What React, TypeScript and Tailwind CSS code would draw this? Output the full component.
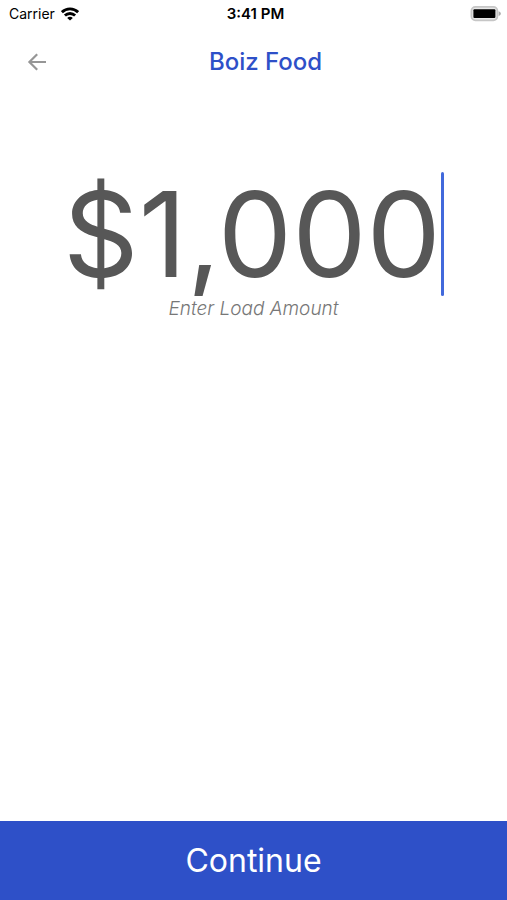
import React, { useState } from 'react'

const WifiIcon = () => (
  <svg viewBox="0 0 18 14" className="w-[18px] h-[14px]" fill="none" stroke="#000" strokeWidth="2.8" aria-hidden="true">
    <path d="M0.9 5.2C5.4 0.7 12.6 0.7 17.1 5.2" />
    <path d="M3.9 8.6C6.7 5.8 11.3 5.8 14.1 8.6" />
    <path d="M9 13.6L6.2 10.9C7.8 9.4 10.2 9.4 11.8 10.9Z" fill="#000" stroke="none" />
  </svg>
)

const BatteryIcon = () => (
  <svg viewBox="0 0 32 16" className="w-8 h-4" aria-hidden="true">
    <rect x="1.4" y="0.9" width="26" height="13.4" rx="4" fill="#e8e8e8" stroke="#c6c6c6" strokeWidth="1.8" />
    <rect x="3.4" y="3.2" width="22" height="8.8" rx="1" fill="#000" />
    <path d="M28.6 5.2C31.6 6.2 31.6 9 28.6 10Z" fill="#ababab" />
  </svg>
)

const BackIcon = () => (
  <svg viewBox="0 0 20 20" className="w-5 h-5" fill="none" stroke="#969696" strokeWidth="2.2" aria-hidden="true">
    <path d="M11.2 2.2L3.4 10L11.2 17.8M3.6 10H20" />
  </svg>
)

const StatusBar = () => (
  <div className="grid grid-cols-3 items-center h-7 pl-[9px] pr-[5px] text-black">
    <div className="flex items-center gap-[6px] text-sm">
      <span>Carrier</span>
      <WifiIcon />
    </div>
    <span className="text-center text-[15px] font-semibold">3:41 PM</span>
    <div className="flex justify-end">
      <BatteryIcon />
    </div>
  </div>
)

const App = () => {
  const [amount, setAmount] = useState('$1,000')

  const handleChange = (e: React.ChangeEvent<HTMLInputElement>) => {
    const digits = e.target.value.replace(/\D/g, '')
    setAmount('$' + Number(digits).toLocaleString('en-US'))
  }

  return (
    <div className="flex flex-col min-h-screen bg-white font-['Inter',sans-serif]">
      <StatusBar />

      <header className="flex items-center h-[68px] pl-4 pr-8">
        <button type="button" aria-label="Back" className="flex items-center justify-center w-10 h-10 cursor-pointer">
          <BackIcon />
        </button>
        <h1 className="flex-1 text-center text-2xl font-medium text-[#2e50c8]">Boiz Food</h1>
      </header>

      <main className="flex-1 flex flex-col items-center pt-[76px]">
        <div className="flex items-center justify-center">
          <input
            id="amount"
            type="text"
            inputMode="numeric"
            value={amount}
            onChange={handleChange}
            className="field-sizing-content h-[124px] text-[118px] leading-[124px] text-[#575757] outline-none caret-transparent"
          />
          <span className="w-[3px] h-[124px] rounded-full bg-[#4169dc]" />
        </div>
        <label htmlFor="amount" className="text-[19px] leading-[26px] font-light italic text-[#777777]">
          Enter Load Amount
        </label>
      </main>

      <button type="button" className="w-full h-[79px] bg-[#2e50c8] text-white text-[32px] cursor-pointer">
        Continue
      </button>
    </div>
  )
}

export default App
